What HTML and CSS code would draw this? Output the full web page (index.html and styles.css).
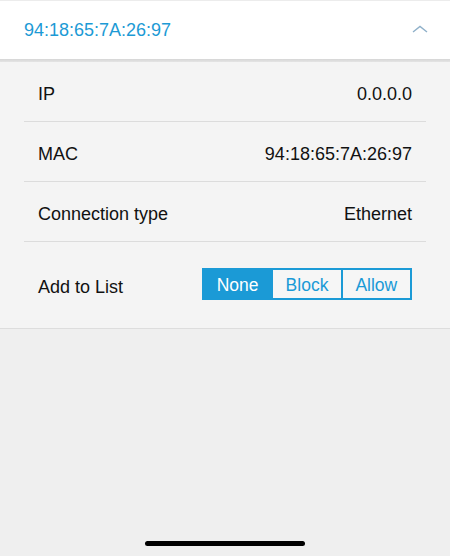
FILE: index.html
```html
<!DOCTYPE html>
<html lang="en">
<head>
    <meta charset="UTF-8">
    <meta name="viewport" content="width=device-width, initial-scale=1.0">
    <title>Device Details</title>
    <link rel="stylesheet" href="styles.css">
</head>
<body>
    <div class="screen">
        <div class="device-header">
            <span class="device-name">94:18:65:7A:26:97</span>
            <svg class="chevron" width="16" height="8" viewBox="0 0 16 8">
                <polyline points="1,7 8,1.5 15,7" fill="none" stroke="#8fb0c9" stroke-width="1.4"/>
            </svg>
        </div>
        <div class="header-shadow"></div>

        <div class="device-details">
            <div class="detail-row">
                <span class="detail-label">IP</span>
                <span class="detail-value">0.0.0.0</span>
            </div>
            <div class="detail-row">
                <span class="detail-label">MAC</span>
                <span class="detail-value">94:18:65:7A:26:97</span>
            </div>
            <div class="detail-row">
                <span class="detail-label">Connection type</span>
                <span class="detail-value">Ethernet</span>
            </div>
            <div class="detail-row list-row">
                <span class="detail-label list-label">Add to List</span>
                <div class="segmented">
                    <button class="segment active">None</button>
                    <button class="segment">Block</button>
                    <button class="segment">Allow</button>
                </div>
            </div>
        </div>

        <div class="home-bar"></div>
    </div>
</body>
</html>
```

FILE: styles.css
```css
body {
    margin: 0;
    padding: 0;
    font-family: "Liberation Sans", Arial, sans-serif;
    background-color: #efefef;
}
.screen {
    display: flex;
    flex-direction: column;
    height: 100vh;
}
.device-header {
    box-sizing: border-box;
    height: 59px;
    display: flex;
    align-items: center;
    justify-content: space-between;
    padding: 0 24px;
    background-color: #fff;
    border-top: 1px solid #ececec;
}
.device-name {
    font-size: 18px;
    color: #1c9ad5;
}
.chevron {
    display: block;
    margin-top: -2px;
    margin-right: -2px;
}
.header-shadow {
    height: 3px;
    background: linear-gradient(#d6d6d6, #e4e4e4);
}
.device-details {
    background-color: #f4f4f4;
    padding: 0 24px;
    border-bottom: 1px solid #dddddd;
}
.detail-row {
    box-sizing: border-box;
    height: 60px;
    display: flex;
    align-items: center;
    justify-content: space-between;
    padding: 6px 14px 0 14px;
    border-bottom: 1px solid #dcdcdc;
    font-size: 18px;
    color: #111;
}
.list-row {
    height: 86px;
    padding: 0 14px 2px 14px;
    border-bottom: none;
}
.list-label {
    padding-top: 6px;
}
.segmented {
    display: flex;
    border: 2px solid #1b9ad6;
    width: 210px;
    box-sizing: border-box;
    height: 32px;
}
.segment {
    flex: 1;
    border: none;
    border-left: 2px solid #1b9ad6;
    background-color: #f6f6f6;
    color: #1b9ad6;
    font-family: "Liberation Sans", Arial, sans-serif;
    font-size: 17.5px;
    padding: 2px 0 0 0;
    margin: 0;
}
.segment:first-child {
    border-left: none;
}
.segment.active {
    background-color: #1b9ad6;
    color: #fff;
}
.home-bar {
    margin: auto auto 10px auto;
    width: 160px;
    height: 5px;
    border-radius: 3px;
    background-color: #000;
}
```
